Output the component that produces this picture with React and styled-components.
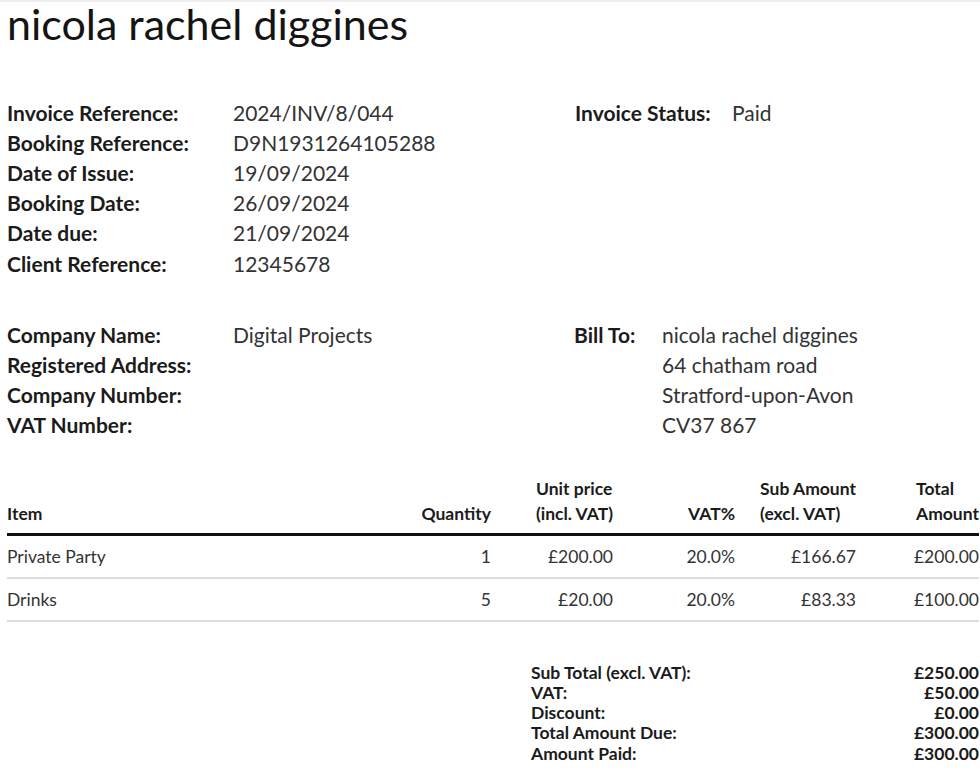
import styled, { createGlobalStyle } from 'styled-components'

const GlobalStyle = createGlobalStyle`
    html, body {
        margin: 0;
        padding: 0;
        background: #ffffff;
    }
    body {
        font-family: Lato, "Open Sans", sans-serif;
        color: #222;
    }
`

const Page = styled.div`
    box-sizing: border-box;
    width: 980px;
    padding: 0 1px 20px 7px;
    border-top: 2px solid #eeeeee;
`

const Title = styled.h1`
    margin: 0;
    font-size: 43px;
    font-weight: 400;
    line-height: 44px;
    color: #141414;
`

const InfoBlock = styled.section`
    display: flex;
    margin-top: ${(p) => p.$top}px;
`

const InfoGrid = styled.div`
    display: grid;
    grid-template-columns: ${(p) => p.$label}px 1fr;
    grid-auto-rows: 30.2px;
    align-items: center;
    width: ${(p) => p.$width || 'auto'};
`

const Label = styled.div`
    font-size: 21px;
    font-weight: 700;
    color: #1b1b1b;
`

const Value = styled.div`
    font-size: 21px;
    font-weight: 400;
    color: #333;
`

const Table = styled.table`
    width: 972px;
    margin-top: 36px;
    border-collapse: collapse;
    table-layout: fixed;
    font-size: 17.5px;
`

const Th = styled.th`
    padding: 0 0 7px 0;
    font-weight: 700;
    color: #1b1b1b;
    line-height: 25px;
    vertical-align: bottom;
    text-align: ${(p) => p.$align || 'right'};
    border-bottom: 3px solid #111;
`

const HeadLines = styled.span`
    display: inline-block;
    text-align: left;
`

const Td = styled.td`
    height: 41px;
    padding: 0;
    color: #333;
    text-align: ${(p) => p.$align || 'right'};
    border-bottom: 2px solid #dddddd;
`

const Totals = styled.div`
    display: grid;
    grid-template-columns: 1fr auto;
    grid-auto-rows: 20.3px;
    align-items: center;
    width: 448px;
    margin: 40px 0 0 auto;
    font-size: 17.5px;
    font-weight: 700;
    color: #1b1b1b;
`

const TotalValue = styled.div`
    text-align: right;
`

const refs = [
    ['Invoice Reference:', '2024/INV/8/044'],
    ['Booking Reference:', 'D9N1931264105288'],
    ['Date of Issue:', '19/09/2024'],
    ['Booking Date:', '26/09/2024'],
    ['Date due:', '21/09/2024'],
    ['Client Reference:', '12345678'],
]

const company = [
    ['Company Name:', 'Digital Projects'],
    ['Registered Address:', ''],
    ['Company Number:', ''],
    ['VAT Number:', ''],
]

const billTo = ['nicola rachel diggines', '64 chatham road', 'Stratford-upon-Avon', 'CV37 867']

const items = [
    { name: 'Private Party', qty: 1, unit: '£200.00', vat: '20.0%', sub: '£166.67', total: '£200.00' },
    { name: 'Drinks', qty: 5, unit: '£20.00', vat: '20.0%', sub: '£83.33', total: '£100.00' },
]

const totals = [
    ['Sub Total (excl. VAT):', '£250.00'],
    ['VAT:', '£50.00'],
    ['Discount:', '£0.00'],
    ['Total Amount Due:', '£300.00'],
    ['Amount Paid:', '£300.00'],
]

export default function App() {
    return (
        <>
            <GlobalStyle />
            <Page>
                <Title>nicola rachel diggines</Title>

                <InfoBlock $top={51}>
                    <InfoGrid $label={226} $width="568px">
                        {refs.map(([l, v]) => (
                            <>
                                <Label key={l}>{l}</Label>
                                <Value key={l + 'v'}>{v}</Value>
                            </>
                        ))}
                    </InfoGrid>
                    <InfoGrid $label={157}>
                        <Label>Invoice Status:</Label>
                        <Value>Paid</Value>
                    </InfoGrid>
                </InfoBlock>

                <InfoBlock $top={41}>
                    <InfoGrid $label={226} $width="567px">
                        {company.map(([l, v]) => (
                            <>
                                <Label key={l}>{l}</Label>
                                <Value key={l + 'v'}>{v}</Value>
                            </>
                        ))}
                    </InfoGrid>
                    <InfoGrid $label={88}>
                        {billTo.map((line, i) => (
                            <>
                                <Label key={'l' + i}>{i === 0 ? 'Bill To:' : ''}</Label>
                                <Value key={'v' + i}>{line}</Value>
                            </>
                        ))}
                    </InfoGrid>
                </InfoBlock>

                <Table>
                    <colgroup>
                        <col style={{ width: 362 }} />
                        <col style={{ width: 122 }} />
                        <col style={{ width: 122 }} />
                        <col style={{ width: 122 }} />
                        <col style={{ width: 121 }} />
                        <col style={{ width: 123 }} />
                    </colgroup>
                    <thead>
                        <tr>
                            <Th $align="left">Item</Th>
                            <Th>Quantity</Th>
                            <Th><HeadLines>Unit price<br />(incl. VAT)</HeadLines></Th>
                            <Th>VAT%</Th>
                            <Th><HeadLines>Sub Amount<br />(excl. VAT)</HeadLines></Th>
                            <Th><HeadLines>Total<br />Amount</HeadLines></Th>
                        </tr>
                    </thead>
                    <tbody>
                        {items.map((it) => (
                            <tr key={it.name}>
                                <Td $align="left">{it.name}</Td>
                                <Td>{it.qty}</Td>
                                <Td>{it.unit}</Td>
                                <Td>{it.vat}</Td>
                                <Td>{it.sub}</Td>
                                <Td>{it.total}</Td>
                            </tr>
                        ))}
                    </tbody>
                </Table>

                <Totals>
                    {totals.map(([l, v]) => (
                        <>
                            <div key={l}>{l}</div>
                            <TotalValue key={l + 'v'}>{v}</TotalValue>
                        </>
                    ))}
                </Totals>
            </Page>
        </>
    )
}
